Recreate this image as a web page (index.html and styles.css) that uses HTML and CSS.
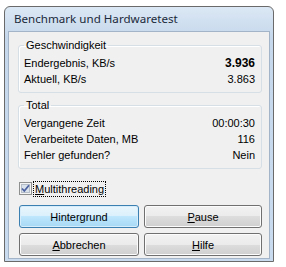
FILE: index.html
```html
<!DOCTYPE html>
<html lang="de">
<head>
<meta charset="UTF-8" />
<title>Benchmark und Hardwaretest</title>
<link rel="stylesheet" href="styles.css">
</head>
<body>

<div class="fenster">
  <div class="titelleiste">Benchmark und Hardwaretest</div>
  <div class="inhalt">

    <fieldset class="gruppe gruppe-oben">
      <legend>Geschwindigkeit</legend>
      <div class="zeile"><span>Endergebnis, KB/s</span><span class="wert fett">3.936</span></div>
      <div class="zeile"><span>Aktuell, KB/s</span><span class="wert">3.863</span></div>
    </fieldset>

    <fieldset class="gruppe">
      <legend>Total</legend>
      <div class="zeile"><span>Vergangene Zeit</span><span class="wert">00:00:30</span></div>
      <div class="zeile"><span>Verarbeitete Daten, MB</span><span class="wert">116</span></div>
      <div class="zeile"><span>Fehler gefunden?</span><span class="wert">Nein</span></div>
    </fieldset>

    <label class="option">
      <svg class="kaestchen" width="13" height="13" viewBox="0 0 13 13">
        <rect x="0.5" y="0.5" width="12" height="12" fill="#f4f4f4" stroke="#8e8f8f"/>
        <rect x="2.5" y="2.5" width="8" height="8" fill="#d9e1ea" stroke="#b5bec8"/>
        <path d="M3 6.5 L5.3 9 L10 3.2" fill="none" stroke="#4b61a0" stroke-width="1.7"/>
      </svg>
      <span class="fokus"><u>M</u>ultithreading</span>
    </label>

    <div class="knoepfe">
      <button class="knopf standard">Hintergrund</button>
      <button class="knopf"><u>P</u>ause</button>
      <button class="knopf"><u>A</u>bbrechen</button>
      <button class="knopf"><u>H</u>ilfe</button>
    </div>

  </div>
</div>

</body>
</html>
```

FILE: styles.css
```css
/* Grundlayout */
html, body {
  margin: 0;
  background: #fff;
}

body {
  font-family: "Liberation Sans", Arial, sans-serif;
  font-size: 11px;
  color: #000;
}

/* Fensterrahmen im Win7-Basis-Stil */
.fenster {
  margin: 6px 0 0 4px;
  width: 270px;
  height: 256px;
  box-sizing: border-box;
  border: 1px solid #6a6a6a;
  border-radius: 6px 6px 0 0;
  background: linear-gradient(#dbe7f4, #c6d8ec 30px, #c9dbee);
  padding: 0 3px 2px 3px;
}

.titelleiste {
  height: 24px;
  line-height: 24px;
  padding-left: 6px;
  font-family: "Noto Sans", "Open Sans", sans-serif;
  font-size: 11.6px;
  color: #1a2a3a;
}

.inhalt {
  height: 228px;
  box-sizing: border-box;
  border: 1px solid #a3b4c8;
  background: #f0f0f0;
  padding: 5px 7px 0 9px;
}

/* Gruppenrahmen */
.gruppe {
  margin: 4px 0 0 0;
  padding: 2px 5px 5px 5px;
  border: 1px solid #d5dfe5;
  border-radius: 3px;
  box-shadow: inset 1px 1px 0 #fff;
}

.gruppe-oben {
  margin-top: 0;
}

.gruppe legend {
  padding: 0 2px;
  line-height: 16px;
}

.zeile {
  display: flex;
  justify-content: space-between;
  line-height: 16px;
  height: 16px;
  padding-right: 1px;
}

.fett {
  font-weight: bold;
  font-size: 12px;
}

/* Kontrollkaestchen */
.option {
  display: flex;
  align-items: center;
  gap: 2px;
  margin: 12px 0 0 1px;
  height: 15px;
}

.kaestchen {
  display: block;
}

.fokus {
  outline: 1px dotted #000;
  padding: 0 1px;
  line-height: 14px;
}

/* Schaltflaechen */
.knoepfe {
  display: grid;
  grid-template-columns: 120px 118px;
  gap: 5px 5px;
  margin: 9px 0 0 1px;
}

.knopf {
  height: 23px;
  margin: 0;
  padding: 0;
  font-family: "Liberation Sans", Arial, sans-serif;
  font-size: 11px;
  color: #000;
  border: 1px solid #707070;
  border-radius: 3px;
  background: linear-gradient(#f2f2f2, #ebebeb 50%, #dddddd 50%, #cfcfcf);
  box-shadow: inset 0 0 0 1px #fcfcfc;
}

.knopf.standard {
  border-color: #3c7fb1;
  background: linear-gradient(#eaf6fd, #d9f0fc 50%, #bee6fd 50%, #a7d9f5);
  box-shadow: inset 0 0 0 1px #d6eefb;
}
```
